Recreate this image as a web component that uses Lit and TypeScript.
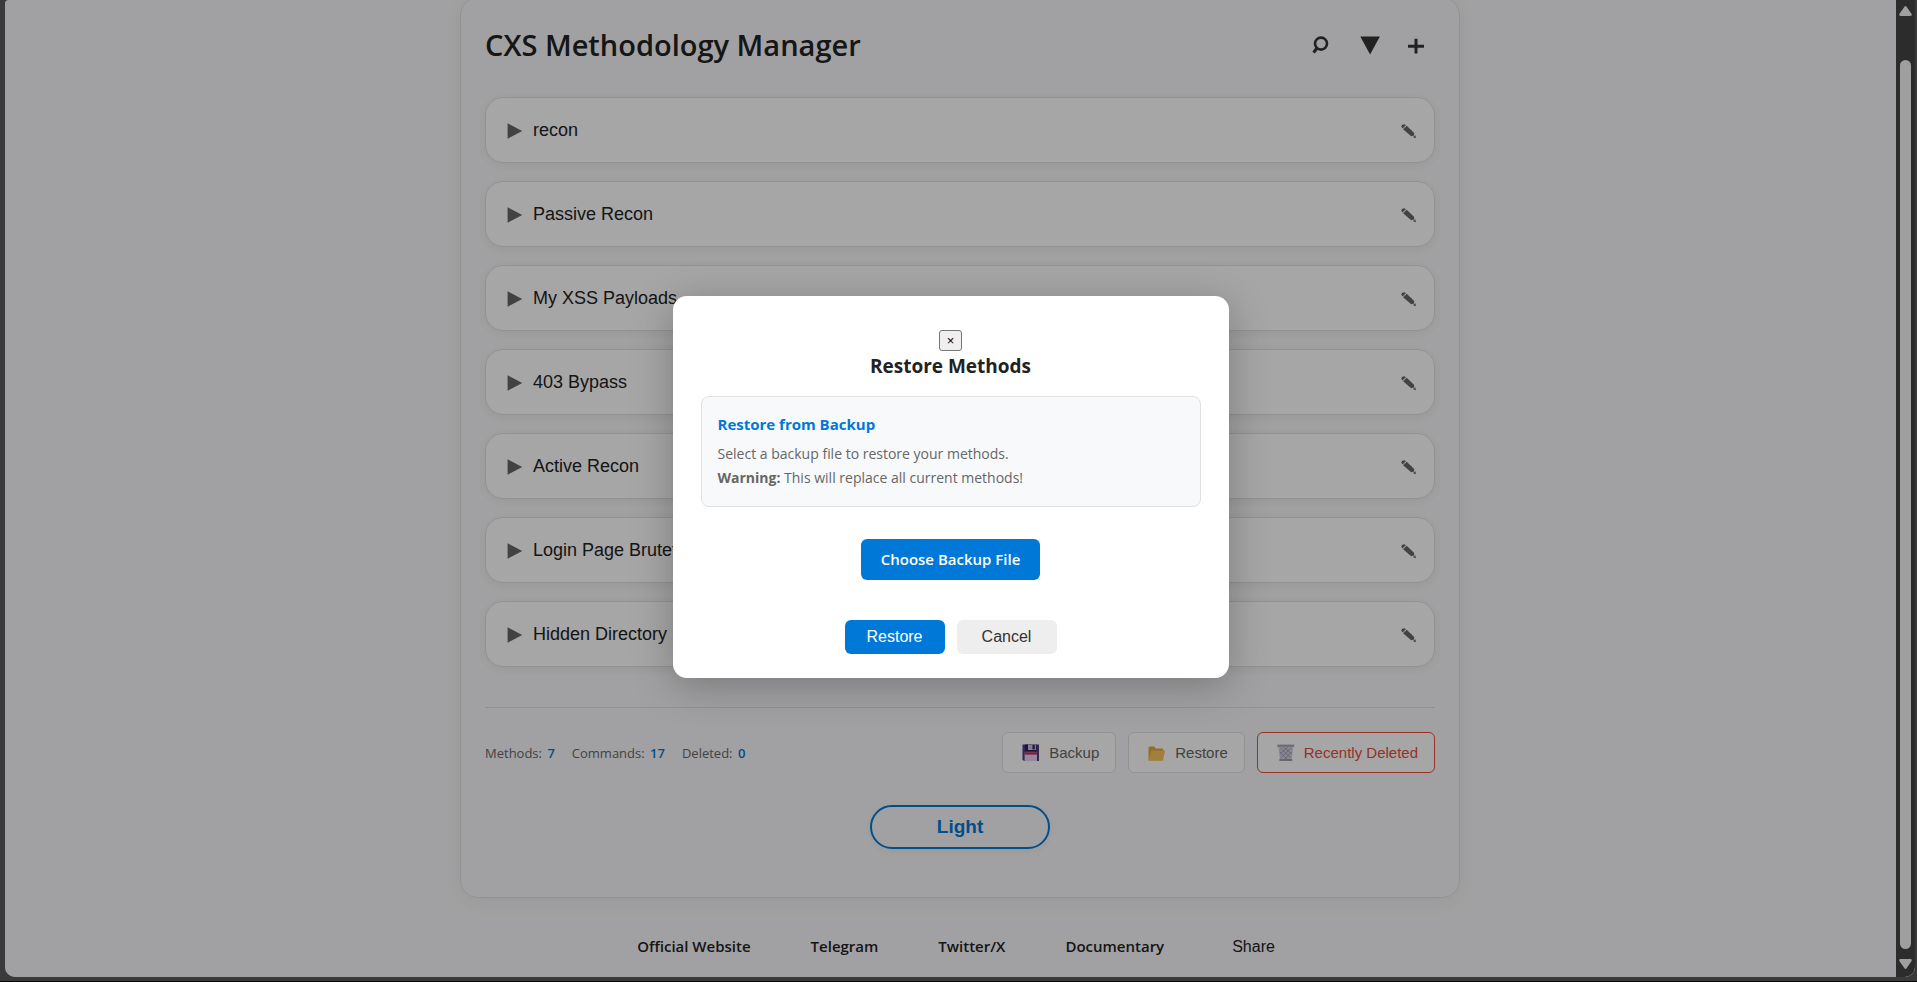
import { LitElement, html, css, svg } from "lit";
import { customElement, state } from "lit/decorators.js";

const searchIcon = svg`<circle cx="7" cy="8.6" r="6" fill="none" stroke="currentColor" stroke-width="2.6"/><path d="M3.2 12.8 L-0.4 17.6" stroke="currentColor" stroke-width="3.2" fill="none"/>`;
const filterIcon = svg`<path d="M0.3 1.6 H19.9 L10.1 19.4 Z" fill="currentColor"/>`;
const plusIcon = svg`<path d="M2 11.2 H18 M10 3.8 V18.6" stroke="currentColor" stroke-width="3" fill="none"/>`;

const floppy = svg`
  <path d="M3.5 1.5 H20 V18 H5 L3.5 16.5 Z" fill="#4b3f7c"/>
  <path d="M6 1.5 H17.5 V8 H6 Z" fill="#2e2456"/>
  <path d="M9 1.5 H17 V7 H9 Z" fill="#cdbfe3"/>
  <path d="M13.5 2 H15.8 V6.4 H13.5 Z" fill="#2e2456"/>
  <path d="M5.6 9.5 H18 V18 H5.6 Z" fill="#e3d0f5"/>
  <path d="M5.6 9.5 H18 V11.6 H5.6 Z" fill="#d6234a"/>`;
const folder = svg`
  <path d="M3.5 5 Q3.5 3.6 4.8 3.6 H9 L10.8 5.4 H17 Q18.2 5.4 18.2 6.6 V17.4 H3.5 Z" fill="#e3a93a"/>
  <path d="M3.6 17.6 L6 8.6 Q6.4 7.4 7.6 7.4 H18.9 Q20.4 7.4 20 8.8 L17.8 16.6 Q17.5 17.6 16.4 17.6 Z" fill="#f8c45c"/>`;
const bin = svg`
  <path d="M4.4 3.4 H19.2 L17.6 17 H6 Z" fill="#d2cfdc"/>
  <path d="M6.4 5 L17 15 M9.8 4.4 L17.6 11 M5.8 9 L13.4 16.4 M17.2 5 L6.6 15 M13.8 4.4 L6 11 M17.8 9 L10.2 16.4" stroke="#a09cae" stroke-width="0.9" fill="none"/>
  <path d="M3.4 1.6 H20.2 V3.8 H3.4 Z" fill="#a6a2b2"/>
  <path d="M5.4 16 H18.2 V18 H5.4 Z" fill="#a29eae"/>`;

@customElement("method-row")
class MethodRow extends LitElement {
  static properties = { name: { type: String } };
  declare name: string;

  static styles = css`
    :host {
      display: flex;
      align-items: center;
      justify-content: space-between;
      box-sizing: border-box;
      min-height: 66px;
      padding: 0 17px 0 21px;
      border: 1px solid #e0e0e0;
      border-radius: 18px;
      background: #fff;
      box-shadow: 0 2px 12px rgba(0, 0, 0, 0.06);
    }
    button {
      display: flex;
      align-items: center;
      gap: 10px;
      padding: 0;
      border: 0;
      background: none;
      color: #222;
      font: 18px "Liberation Sans", Arial, sans-serif;
      cursor: pointer;
    }
    svg {
      width: 16px;
      height: 18px;
      color: #666;
    }
  `;

  render() {
    return html`
      <button type="button" aria-expanded="false">
        <svg viewBox="0 0 16 18" aria-hidden="true"><path d="M0.6 2.2 L15.2 10 L0.6 17.8 Z" fill="currentColor" /></svg>
        ${this.name}
      </button>
      <button type="button" aria-label="Edit ${this.name}">
        <svg viewBox="0 0 16 18" aria-hidden="true">
          <path d="M0.4 5.6 Q0.2 3.4 2.4 3.4 Q4 3.2 4.8 4.2 L1.6 7.4 Q0.6 6.8 0.4 5.6 Z" fill="currentColor" />
          <path d="M5.7 4.7 L13.2 12 L13 14.6 L10.2 15.2 L2.1 8.3 Z" fill="currentColor" />
          <path d="M14.2 14 L15 17.2 L12 16.2 Z" fill="currentColor" />
        </svg>
      </button>
    `;
  }
}

@customElement("restore-dialog")
class RestoreDialog extends LitElement {
  static styles = css`
    :host {
      display: flex;
      flex-direction: column;
      align-items: center;
      box-sizing: border-box;
      width: 556px;
      max-width: 100%;
      padding: 34px 28px 24px;
      border-radius: 14px;
      background: #fff;
      color: #222;
      box-shadow: 0 8px 40px rgba(0, 0, 0, 0.25);
      font-family: "Open Sans", "Noto Sans", sans-serif;
    }
    button {
      border: 0;
      border-radius: 6px;
      cursor: pointer;
    }
    .close {
      padding: 3px 7px;
      border: 1px solid #767676;
      border-radius: 3px;
      background: #efefef;
      color: #000;
      font: 13px/13px "Liberation Sans", Arial, sans-serif;
    }
    h2 {
      margin: 2px 0 17px;
      font-size: 19px;
      line-height: 26px;
      font-weight: 700;
    }
    .info {
      align-self: stretch;
      padding: 15px 16px 16px;
      border: 1px solid #e0e0e0;
      border-radius: 8px;
      background: #f8f9fb;
    }
    h3 {
      margin: 0 0 6px;
      color: #0078d7;
      font-size: 15px;
      line-height: 24px;
      font-weight: 700;
    }
    p {
      margin: 0;
      color: #666;
      font-size: 14px;
      line-height: 24px;
    }
    .choose {
      margin: 32px 0 40px;
      padding: 10px 20px;
      background: #0078d7;
      color: #fff;
      font: 600 15px/21px "Open Sans", "Noto Sans", sans-serif;
    }
    .actions {
      display: flex;
      gap: 12px;
    }
    .action {
      min-width: 100px;
      padding: 8px 16px;
      background: #eee;
      color: #333;
      font: 16px/18px "Liberation Sans", Arial, sans-serif;
    }
    .primary {
      background: #0078d7;
      color: #fff;
    }
  `;

  render() {
    return html`
      <button class="close" type="button" aria-label="Close">×</button>
      <h2>Restore Methods</h2>
      <section class="info">
        <h3>Restore from Backup</h3>
        <p>Select a backup file to restore your methods.</p>
        <p><strong>Warning:</strong> This will replace all current methods!</p>
      </section>
      <button class="choose" type="button">Choose Backup File</button>
      <div class="actions">
        <button class="action primary" type="button">Restore</button>
        <button class="action" type="button">Cancel</button>
      </div>
    `;
  }
}

@customElement("app-root")
class AppRoot extends LitElement {
  @state() private methods = [
    "recon",
    "Passive Recon",
    "My XSS Payloads",
    "403 Bypass",
    "Active Recon",
    "Login Page Bruteforce",
    "Hidden Directory",
  ];

  static styles = css`
    :host {
      display: block;
      box-sizing: border-box;
      height: 100vh;
      padding: 0 2px 4px 5px;
      border-bottom: 1px solid #050505;
      background: #3a3a3a;
      font-family: "Open Sans", "Noto Sans", sans-serif;
      color: #222;
    }
    .screen {
      position: relative;
      height: 100%;
      overflow: hidden;
      border-radius: 4px 0 10px 10px;
      background: #f8f8fa;
    }
    .card {
      box-sizing: border-box;
      max-width: 1000px;
      margin: -3px auto 0;
      padding: 24px;
      border: 1px solid #e0e0e0;
      border-radius: 18px;
      box-shadow: 0 4px 24px rgba(0, 0, 0, 0.06);
    }
    header,
    .bottom,
    .stats,
    .tools,
    .buttons,
    footer {
      display: flex;
      align-items: center;
    }
    header {
      justify-content: space-between;
      margin-bottom: 29px;
    }
    h1 {
      margin: 0;
      font-size: 29px;
      line-height: 46px;
      font-weight: 600;
    }
    button {
      cursor: pointer;
    }
    .tools {
      gap: 8px;
    }
    .tool {
      display: flex;
      padding: 9px;
      border: 0;
      background: none;
      color: #333;
    }
    .tool svg {
      width: 20px;
      height: 20px;
      overflow: visible;
    }
    .list {
      display: grid;
      gap: 18px;
    }
    .bottom {
      justify-content: space-between;
      margin-top: 40px;
      padding-top: 24px;
      border-top: 1px solid #e0e0e0;
    }
    .stats {
      gap: 17px;
      color: #666;
      font-size: 13px;
      line-height: 20px;
    }
    .stats b {
      margin-left: 2px;
      color: #0078d7;
      font-weight: 600;
    }
    .buttons {
      gap: 12px;
    }
    .data {
      display: flex;
      align-items: center;
      gap: 8px;
      padding: 10px 16px;
      border: 1px solid #e0e0e0;
      border-radius: 6px;
      background: #fff;
      color: #666;
      font: 15px/19px "Liberation Sans", Arial, sans-serif;
    }
    .data svg {
      width: 22px;
      height: 19px;
    }
    .danger {
      border-color: #e74c3c;
      color: #e74c3c;
    }
    .theme {
      display: block;
      width: 180px;
      margin: 32px auto 24px;
      padding: 10px;
      border: 2px solid #0078d7;
      border-radius: 22px;
      background: none;
      color: #0078d7;
      box-shadow: 0 2px 8px rgba(0, 0, 0, 0.06);
      font: 700 19px/20px "Liberation Sans", Arial, sans-serif;
    }
    footer {
      align-items: baseline;
      justify-content: center;
      gap: 60px;
      margin-top: 36px;
      font-size: 15px;
      line-height: 24px;
    }
    footer a {
      color: #222;
      font-weight: 600;
      text-decoration: none;
    }
    .share {
      padding: 0 8px;
      border: 0;
      background: none;
      color: #222;
      font: 16px/24px "Liberation Sans", Arial, sans-serif;
    }
    .overlay {
      position: absolute;
      inset: 0 19px 0 0;
      display: flex;
      align-items: center;
      justify-content: center;
      padding-bottom: 4px;
      background: rgba(0, 0, 0, 0.35);
    }
    .scroll {
      position: absolute;
      inset: 0 0 0 auto;
      box-sizing: border-box;
      width: 19px;
      display: flex;
      flex-direction: column;
      align-items: center;
      padding: 6px 4px 8px 3px;
      background: #2c2c2c;
      color: #9f9f9f;
    }
    .scroll svg {
      width: 13px;
      height: 10px;
      flex: none;
    }
    .thumb {
      flex: 1;
      width: 11px;
      margin: 44px 0 10px;
      border-radius: 6px;
      background: #9f9f9f;
    }
  `;

  private icon(shape: unknown, box = "0 0 20 20") {
    return html`<svg viewBox=${box} aria-hidden="true">${shape}</svg>`;
  }

  render() {
    return html`
      <div class="screen">
        <main class="card">
          <header>
            <h1>CXS Methodology Manager</h1>
            <div class="tools">
              <button class="tool" type="button" aria-label="Search">${this.icon(searchIcon)}</button>
              <button class="tool" type="button" aria-label="Filter">${this.icon(filterIcon)}</button>
              <button class="tool" type="button" aria-label="Add method">${this.icon(plusIcon)}</button>
            </div>
          </header>
          <div class="list">${this.methods.map((m) => html`<method-row .name=${m}></method-row>`)}</div>
          <div class="bottom">
            <div class="stats">
              <span>Methods: <b>7</b></span>
              <span>Commands: <b>17</b></span>
              <span>Deleted: <b>0</b></span>
            </div>
            <div class="buttons">
              <button class="data" type="button">${this.icon(floppy, "0 0 22 19")}Backup</button>
              <button class="data" type="button">${this.icon(folder, "0 0 22 19")}Restore</button>
              <button class="data danger" type="button">${this.icon(bin, "0 0 22 19")}Recently Deleted</button>
            </div>
          </div>
          <button class="theme" type="button">Light</button>
        </main>
        <footer>
          <a href="#website">Official Website</a>
          <a href="#telegram">Telegram</a>
          <a href="#twitter">Twitter/X</a>
          <a href="#documentary">Documentary</a>
          <button class="share" type="button">Share</button>
        </footer>
        <div class="overlay">
          <restore-dialog role="dialog" aria-modal="true" aria-label="Restore Methods"></restore-dialog>
        </div>
        <div class="scroll" aria-hidden="true">
          <svg viewBox="0 0 13 10"><path d="M5.4 0.8 Q6.5 -0.6 7.6 0.8 L12.6 8 Q13.2 9.8 11.6 10 H1.4 Q-0.2 9.8 0.4 8 Z" fill="currentColor" /></svg>
          <div class="thumb"></div>
          <svg viewBox="0 0 13 10"><path d="M5.4 9.2 Q6.5 10.6 7.6 9.2 L12.6 2 Q13.2 0.2 11.6 0 H1.4 Q-0.2 0.2 0.4 2 Z" fill="currentColor" /></svg>
        </div>
      </div>
    `;
  }
}
